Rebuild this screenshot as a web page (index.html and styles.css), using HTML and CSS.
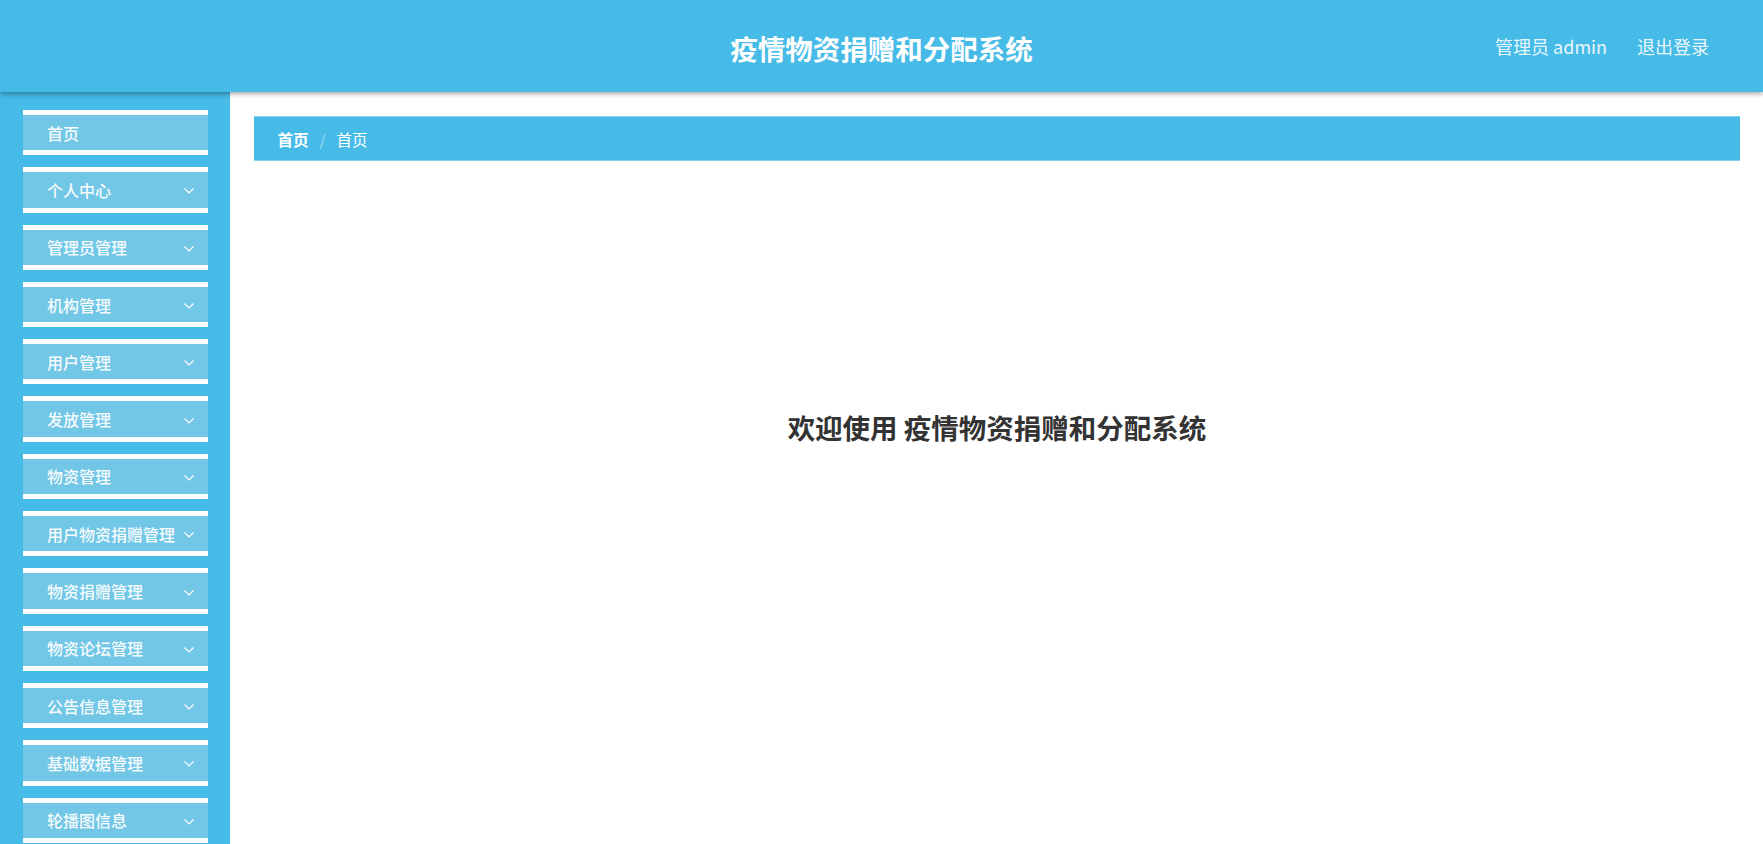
FILE: index.html
```html
<!DOCTYPE html>
<html lang="zh-CN">
<head>
<meta charset="utf-8">
<title>疫情物资捐赠和分配系统</title>
<link rel="stylesheet" href="styles.css">
</head>
<body>
<header class="topbar">
  <div class="brand">疫情物资捐赠和分配系统</div>
  <div class="user">
    <span class="user-name">管理员 admin</span>
    <span class="logout">退出登录</span>
  </div>
</header>
<div class="body">
  <aside class="sidebar">
    <ul class="menu">
      <li class="menu-item"><span class="label">首页</span></li>
      <li class="menu-item"><span class="label">个人中心</span><svg class="chev" viewBox="0 0 10 6"><polyline points="0.5,0.5 5,5 9.5,0.5"/></svg></li>
      <li class="menu-item"><span class="label">管理员管理</span><svg class="chev" viewBox="0 0 10 6"><polyline points="0.5,0.5 5,5 9.5,0.5"/></svg></li>
      <li class="menu-item"><span class="label">机构管理</span><svg class="chev" viewBox="0 0 10 6"><polyline points="0.5,0.5 5,5 9.5,0.5"/></svg></li>
      <li class="menu-item"><span class="label">用户管理</span><svg class="chev" viewBox="0 0 10 6"><polyline points="0.5,0.5 5,5 9.5,0.5"/></svg></li>
      <li class="menu-item"><span class="label">发放管理</span><svg class="chev" viewBox="0 0 10 6"><polyline points="0.5,0.5 5,5 9.5,0.5"/></svg></li>
      <li class="menu-item"><span class="label">物资管理</span><svg class="chev" viewBox="0 0 10 6"><polyline points="0.5,0.5 5,5 9.5,0.5"/></svg></li>
      <li class="menu-item"><span class="label">用户物资捐赠管理</span><svg class="chev" viewBox="0 0 10 6"><polyline points="0.5,0.5 5,5 9.5,0.5"/></svg></li>
      <li class="menu-item"><span class="label">物资捐赠管理</span><svg class="chev" viewBox="0 0 10 6"><polyline points="0.5,0.5 5,5 9.5,0.5"/></svg></li>
      <li class="menu-item"><span class="label">物资论坛管理</span><svg class="chev" viewBox="0 0 10 6"><polyline points="0.5,0.5 5,5 9.5,0.5"/></svg></li>
      <li class="menu-item"><span class="label">公告信息管理</span><svg class="chev" viewBox="0 0 10 6"><polyline points="0.5,0.5 5,5 9.5,0.5"/></svg></li>
      <li class="menu-item"><span class="label">基础数据管理</span><svg class="chev" viewBox="0 0 10 6"><polyline points="0.5,0.5 5,5 9.5,0.5"/></svg></li>
      <li class="menu-item"><span class="label">轮播图信息</span><svg class="chev" viewBox="0 0 10 6"><polyline points="0.5,0.5 5,5 9.5,0.5"/></svg></li>
    </ul>
  </aside>
  <main class="main">
    <nav class="breadcrumb">
      <span class="crumb crumb-first">首页</span>
      <span class="sep">/</span>
      <span class="crumb">首页</span>
    </nav>
    <h1 class="welcome">欢迎使用 疫情物资捐赠和分配系统</h1>
  </main>
</div>
</body>
</html>
```

FILE: styles.css
```css
* { box-sizing: border-box; }
html, body {
  margin: 0;
  padding: 0;
  height: 100%;
  overflow: hidden;
}
body {
  font-family: "Noto Sans CJK SC", "Noto Sans", sans-serif;
  background: #ffffff;
  display: flex;
  flex-direction: column;
}
.topbar {
  position: relative;
  z-index: 2;
  height: 92px;
  flex: 0 0 92px;
  background: #46bbe7;
  box-shadow: 0 2px 5px rgba(0, 0, 0, 0.35);
  display: flex;
  align-items: center;
  justify-content: center;
}
.brand {
  color: #ffffff;
  font-size: 27.5px;
  font-weight: 700;
  margin-top: 4px;
}
.user {
  position: absolute;
  right: 54px;
  top: 0;
  height: 92px;
  display: flex;
  align-items: center;
  gap: 28px;
  color: rgba(255, 255, 255, 0.9);
  font-size: 18px;
}
.user-name { font-size: 18px; margin-right: 2px; }
.logout { font-size: 18px; }
.body {
  flex: 1;
  display: flex;
  min-height: 0;
}
.sidebar {
  width: 230px;
  flex: 0 0 230px;
  background: #46bbe7;
  padding: 18px 22px 0 22.5px;
  overflow: hidden;
}
.menu {
  list-style: none;
  margin: 0;
  padding: 0;
}
.menu-item {
  height: 45.3px;
  margin-bottom: 12px;
  border-top: 5px solid #ffffff;
  border-bottom: 5px solid #ffffff;
  background: #73c7e6;
  display: flex;
  align-items: center;
  padding: 0 14px 0 24.5px;
  color: rgba(255, 255, 255, 0.95);
  font-size: 16px;
  font-weight: 500;
}
.label {
  flex: 1;
  white-space: nowrap;
}
.chev {
  width: 10px;
  height: 6px;
  flex: 0 0 10px;
  margin-top: 3px;
  fill: none;
  stroke: #ffffff;
  stroke-width: 1.2;
}
.main {
  flex: 1;
  padding: 24px 23px 0 24px;
}
.breadcrumb {
  height: 45px;
  background: #46bbe7;
  border-top: 1px solid #84d1ee;
  border-bottom: 1px solid #84d1ee;
  display: flex;
  align-items: center;
  padding-left: 23.5px;
  font-size: 15.5px;
  color: #ffffff;
}
.crumb-first { font-weight: 700; }
.sep {
  margin: 0 11px;
  color: #a6dcf1;
  font-weight: 400;
}
.welcome {
  margin: 245px 0 0 0;
  text-align: center;
  font-size: 27.5px;
  font-weight: 700;
  color: #333333;
  line-height: 42px;
}
```
